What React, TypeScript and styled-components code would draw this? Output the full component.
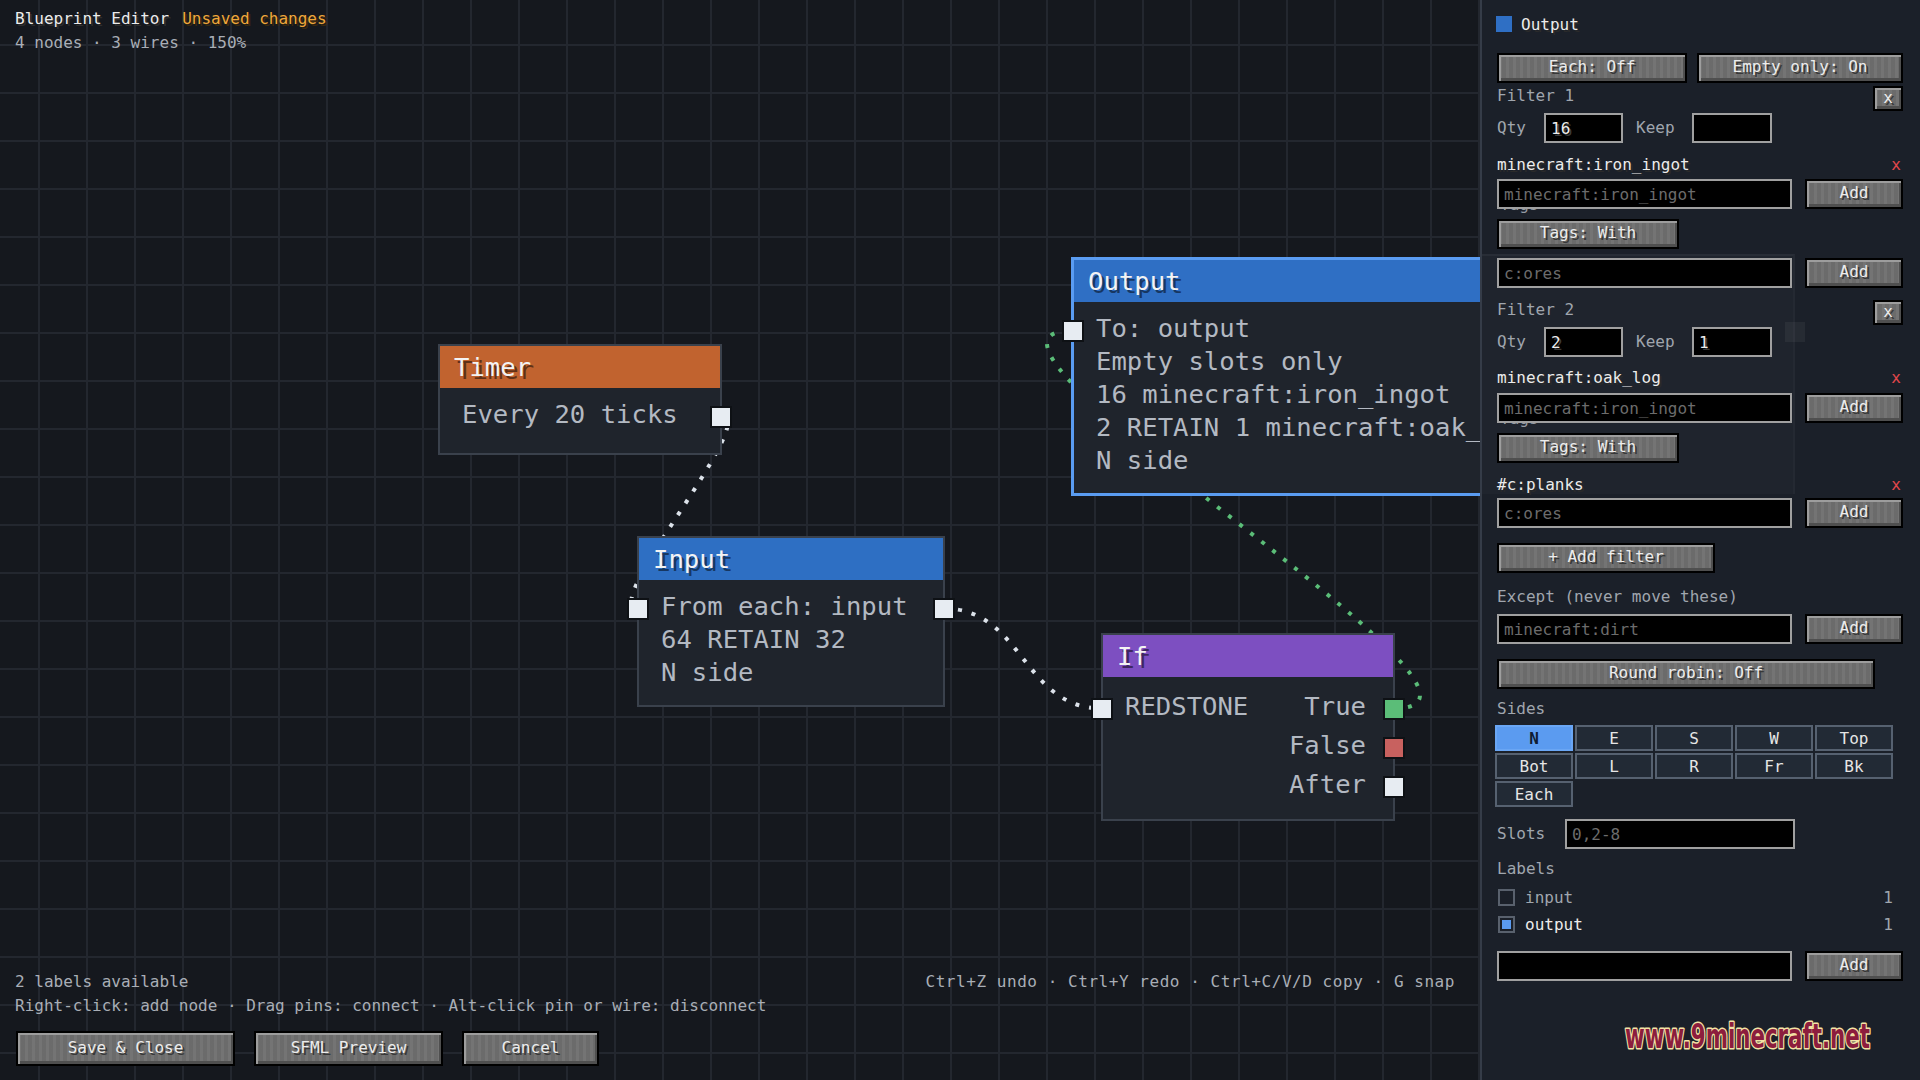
import React from "react";
import styled, { createGlobalStyle } from "styled-components";

const MONO = `"DejaVu Sans Mono", "Liberation Mono", monospace`;

const GlobalStyle = createGlobalStyle`
  html, body { margin: 0; padding: 0; width: 1920px; height: 1080px; overflow: hidden; background: #15181e; }
  body { font-family: ${MONO}; font-size: 16px; }
  *, *::before, *::after { box-sizing: border-box; }
`;

const Screen = styled.div`
  width: 1920px;
  height: 1080px;
  display: flex;
`;

/* ---------------- canvas ---------------- */

const Canvas = styled.main`
  position: relative;
  flex: 1 1 auto;
  min-width: 0;
  height: 100%;
  overflow: hidden;
  background-color: #15181e;
  background-image: linear-gradient(to right, #23272f 0 2px, transparent 2px),
    linear-gradient(to bottom, #23272f 0 2px, transparent 2px);
  background-size: 48px 48px;
  background-position: 38px 44px;
`;

const GraphLayer = styled.div`
  position: absolute;
  inset: 0;
`;

const WireSvg = styled.svg`
  position: absolute;
  left: 0;
  top: 0;
  overflow: visible;
`;

const GraphNode = styled.div<{ $selected?: boolean }>`
  position: absolute;
  display: flex;
  flex-direction: column;
  background: #1f242c;
  border: ${(p) => (p.$selected ? "3px solid #5a9cf2" : "2px solid #3a414c")};
`;

const NodeHeader = styled.div<{ $color: string }>`
  flex: none;
  height: 42px;
  padding-left: 14px;
  display: flex;
  align-items: center;
  background: ${(p) => p.$color};
  color: #f3f3f3;
  font-size: 25.6px;
  text-shadow: 3px 3px 0 rgba(0, 0, 0, 0.5);
  white-space: nowrap;
`;

const NodeBody = styled.div`
  padding-top: 9px;
`;

const NodeLine = styled.div<{ $h?: number; $justify?: string }>`
  position: relative;
  height: ${(p) => p.$h ?? 33}px;
  display: flex;
  align-items: center;
  justify-content: ${(p) => p.$justify ?? "flex-start"};
  padding: 0 27px 0 22px;
  color: #b3b9c2;
  font-size: 25.6px;
  white-space: nowrap;
`;

const Pin = styled.span<{ $side: "left" | "right"; $color?: string }>`
  position: absolute;
  top: 50%;
  margin-top: -8px;
  ${(p) => p.$side}: -12px;
  width: 22px;
  height: 22px;
  background: ${(p) => p.$color ?? "#e7ecf2"};
  border: 2px solid #0e1115;
`;

/* ---------------- canvas overlay ---------------- */

const Overlay = styled.div`
  position: relative;
  z-index: 2;
  height: 100%;
  display: flex;
  flex-direction: column;
  justify-content: space-between;
  padding: 7px 25px 14px 15px;
  font-size: 16px;
  line-height: 24px;
  pointer-events: none;
`;

const TitleLine = styled.div`
  color: #ececec;
  text-shadow: 2px 2px 0 #2e2e2e;
  white-space: nowrap;
`;

const Unsaved = styled.span`
  color: #efa73a;
  margin-left: 13px;
  text-shadow: 2px 2px 0 #3b2a0e;
`;

const HelpText = styled.div<{ $spread?: boolean }>`
  color: #a9aeb6;
  white-space: nowrap;
  letter-spacing: ${(p) => (p.$spread ? "0.55px" : "0")};
`;

const Footer = styled.div`
  display: flex;
  flex-direction: column;
`;

const FooterRow = styled.div`
  display: flex;
  justify-content: space-between;
`;

const ButtonBar = styled.div`
  display: flex;
  gap: 19px;
  margin-top: 13px;
  margin-left: 1px;
`;

const McButton = styled.div<{ $w: number; $h?: number }>`
  flex: none;
  width: ${(p) => p.$w}px;
  height: ${(p) => p.$h ?? 30}px;
  border: 2px solid #000;
  background-color: #6f6f6f;
  background-image: repeating-linear-gradient(
      90deg,
      rgba(255, 255, 255, 0.035) 0 3px,
      rgba(0, 0, 0, 0.035) 3px 7px
    );
  box-shadow: inset 2px 2px 0 #9d9d9d, inset -2px -3px 0 #4f4f4f;
  color: #ececec;
  font-family: ${MONO};
  font-size: 16px;
  line-height: 1;
  text-shadow: 2px 2px 0 #383838;
  display: flex;
  align-items: center;
  justify-content: center;
  padding-bottom: 2px;
  white-space: nowrap;
`;

/* ---------------- sidebar ---------------- */

const Sidebar = styled.aside`
  position: relative;
  z-index: 0;
  flex: none;
  width: 440px;
  height: 100%;
  background: #1b2029;
  border-left: 2px solid #353c48;
  padding: 16px 17px 0 15px;
  display: flex;
  flex-direction: column;
  font-size: 16px;
  color: #e6e6e6;
`;

const GhostPanel = styled.div`
  position: absolute;
  z-index: -1;
  left: 0;
  top: 254px;
  width: 313px;
  height: 240px;
  background: rgba(255, 255, 255, 0.018);
  border-top: 2px solid rgba(255, 255, 255, 0.04);
  border-right: 2px solid rgba(255, 255, 255, 0.025);
`;

const GhostKnob = styled.div`
  position: absolute;
  right: -12px;
  top: 66px;
  width: 20px;
  height: 20px;
  background: rgba(255, 255, 255, 0.05);
`;

const PanelTitle = styled.div`
  flex: none;
  height: 16px;
  display: flex;
  align-items: center;
  gap: 9px;
  color: #ececec;
  text-shadow: 2px 2px 0 #2a2a2a;
`;

const Swatch = styled.span<{ $color: string }>`
  width: 16px;
  height: 16px;
  margin-left: -1px;
  background: ${(p) => p.$color};
`;

const ToggleRow = styled.div<{ $mt: number }>`
  flex: none;
  margin-top: ${(p) => p.$mt}px;
  display: flex;
  gap: 10px;
`;

const FilterHead = styled.div<{ $mt: number }>`
  flex: none;
  margin-top: ${(p) => p.$mt}px;
  height: 25px;
  display: flex;
  justify-content: space-between;
  align-items: flex-start;
`;

const MutedText = styled.span<{ $w?: number; $ml?: number }>`
  flex: none;
  color: #a0a6ae;
  line-height: 20px;
  white-space: nowrap;
  ${(p) => (p.$w ? `width: ${p.$w}px;` : "")}
  ${(p) => (p.$ml ? `margin-left: ${p.$ml}px;` : "")}
`;

const QtyRow = styled.div<{ $mt: number }>`
  flex: none;
  margin-top: ${(p) => p.$mt}px;
  height: 30px;
  display: flex;
  align-items: center;
`;

const ItemRow = styled.div<{ $mt: number }>`
  flex: none;
  margin-top: ${(p) => p.$mt}px;
  height: 18px;
  display: flex;
  align-items: center;
  justify-content: space-between;
  color: #ececec;
  text-shadow: 2px 2px 0 #2a2a2a;
  white-space: nowrap;
`;

const RemoveMark = styled.span`
  color: #e0474b;
  text-shadow: none;
  margin-right: 2px;
`;

const EntryRow = styled.div<{ $mt: number }>`
  position: relative;
  flex: none;
  margin-top: ${(p) => p.$mt}px;
  height: 30px;
  display: flex;
  align-items: center;
  justify-content: space-between;
`;

const PeekLabel = styled.span`
  position: absolute;
  z-index: -1;
  left: 3px;
  top: 17px;
  line-height: 18px;
  color: #959ba3;
`;

const Field = styled.div<{ $w: number; $filled?: boolean }>`
  flex: none;
  width: ${(p) => p.$w}px;
  height: 30px;
  background: #000;
  border: 2px solid #a0a0a0;
  padding-left: 5px;
  display: flex;
  align-items: center;
  color: ${(p) => (p.$filled ? "#ececec" : "#6c6c6c")};
  text-shadow: ${(p) => (p.$filled ? "2px 2px 0 #3a3a3a" : "none")};
  white-space: nowrap;
  overflow: hidden;
`;

const ButtonLine = styled.div<{ $mt: number }>`
  flex: none;
  margin-top: ${(p) => p.$mt}px;
  display: flex;
`;

const SectionLabel = styled.div<{ $mt: number }>`
  flex: none;
  margin-top: ${(p) => p.$mt}px;
  height: 18px;
  line-height: 18px;
  color: #a0a6ae;
  white-space: nowrap;
`;

const SidesGrid = styled.div<{ $mt: number }>`
  flex: none;
  margin-top: ${(p) => p.$mt}px;
  margin-left: -2px;
  display: grid;
  grid-template-columns: repeat(5, 78px);
  grid-auto-rows: 26px;
  gap: 2px;
`;

const SideCell = styled.div<{ $active?: boolean }>`
  display: flex;
  align-items: center;
  justify-content: center;
  border: 2px solid ${(p) => (p.$active ? "#6aa6f4" : "#566170")};
  background: ${(p) => (p.$active ? "#5b9bf0" : "#222a35")};
  color: ${(p) => (p.$active ? "#0f1d33" : "#e6e6e6")};
  font-weight: ${(p) => (p.$active ? 700 : 400)};
`;

const SlotsRow = styled.div<{ $mt: number }>`
  flex: none;
  margin-top: ${(p) => p.$mt}px;
  height: 30px;
  display: flex;
  align-items: center;
`;

const LabelItem = styled.div<{ $mt: number; $on?: boolean }>`
  flex: none;
  margin-top: ${(p) => p.$mt}px;
  height: 18px;
  display: flex;
  align-items: center;
  gap: 10px;
  color: ${(p) => (p.$on ? "#ececec" : "#a0a6ae")};
`;

const CheckBox = styled.span<{ $on?: boolean }>`
  flex: none;
  width: 17px;
  height: 17px;
  margin-left: 1px;
  border: 2px solid #59616d;
  background: ${(p) => (p.$on ? "#5b9bf0" : "transparent")};
  box-shadow: ${(p) => (p.$on ? "inset 0 0 0 2px #1b2029" : "none")};
`;

const Count = styled.span`
  margin-left: auto;
  margin-right: 10px;
  color: #a0a6ae;
`;

const Watermark = styled.svg`
  position: absolute;
  right: 46px;
  top: 1019px;
`;

/* ---------------- data ---------------- */

type Pt = { x: number; y: number };
type NodeGeom = { x: number; y: number; w: number; h: number; b: number };

const TIMER: NodeGeom = { x: 438, y: 344, w: 284, h: 111, b: 2 };
const INPUT: NodeGeom = { x: 637, y: 536, w: 308, h: 171, b: 2 };
const OUTPUT: NodeGeom = { x: 1071, y: 257, w: 480, h: 239, b: 3 };
const IFNODE: NodeGeom = { x: 1101, y: 633, w: 294, h: 188, b: 2 };

const pinY = (n: NodeGeom, idx: number, rowH = 33) =>
  n.y + n.b + 42 + 9 + idx * rowH + rowH / 2 + 3;
const leftPin = (n: NodeGeom, idx: number, rowH = 33): Pt => ({
  x: n.x + n.b - 1,
  y: pinY(n, idx, rowH),
});
const rightPin = (n: NodeGeom, idx: number, rowH = 33): Pt => ({
  x: n.x + n.w - n.b + 1,
  y: pinY(n, idx, rowH),
});

const wirePath = (a: Pt, b: Pt) => {
  const dx = Math.max(40, Math.abs(b.x - a.x) / 2);
  return `M ${a.x} ${a.y} C ${a.x + dx} ${a.y}, ${b.x - dx} ${b.y}, ${b.x} ${b.y}`;
};

const wires = [
  { from: rightPin(TIMER, 0), to: leftPin(INPUT, 0), color: "#dce2ea" },
  { from: rightPin(INPUT, 0), to: leftPin(IFNODE, 0, 39), color: "#dce2ea" },
  { from: rightPin(IFNODE, 0, 39), to: leftPin(OUTPUT, 0), color: "#5bbd78" },
];

const box = (n: NodeGeom) => ({ left: n.x, top: n.y, width: n.w, height: n.h });

const sides = ["N", "E", "S", "W", "Top", "Bot", "L", "R", "Fr", "Bk", "Each"];

export default function App() {
  return (
    <>
      <GlobalStyle />
      <Screen>
        <Canvas>
          <GraphLayer>
            <WireSvg width={1480} height={1080}>
              {wires.map((w, i) => (
                <path
                  key={i}
                  d={wirePath(w.from, w.to)}
                  fill="none"
                  stroke={w.color}
                  strokeWidth={4}
                  strokeDasharray="4 10"
                />
              ))}
            </WireSvg>

            <GraphNode style={box(TIMER)}>
              <NodeHeader $color="#c1632f">Timer</NodeHeader>
              <NodeBody>
                <NodeLine>
                  Every 20 ticks
                  <Pin $side="right" />
                </NodeLine>
              </NodeBody>
            </GraphNode>

            <GraphNode style={box(INPUT)}>
              <NodeHeader $color="#2e6fc3">Input</NodeHeader>
              <NodeBody>
                <NodeLine>
                  <Pin $side="left" />
                  From each: input
                  <Pin $side="right" />
                </NodeLine>
                <NodeLine>64 RETAIN 32</NodeLine>
                <NodeLine>N side</NodeLine>
              </NodeBody>
            </GraphNode>

            <GraphNode style={box(OUTPUT)} $selected>
              <NodeHeader $color="#2f6fc4">Output</NodeHeader>
              <NodeBody>
                <NodeLine>
                  <Pin $side="left" />
                  To: output
                </NodeLine>
                <NodeLine>Empty slots only</NodeLine>
                <NodeLine>16 minecraft:iron_ingot</NodeLine>
                <NodeLine>2 RETAIN 1 minecraft:oak_log</NodeLine>
                <NodeLine>N side</NodeLine>
              </NodeBody>
            </GraphNode>

            <GraphNode style={box(IFNODE)}>
              <NodeHeader $color="#7d4fc1">If</NodeHeader>
              <NodeBody>
                <NodeLine $h={39} $justify="space-between">
                  <Pin $side="left" />
                  <span>REDSTONE</span>
                  <span>True</span>
                  <Pin $side="right" $color="#5bbd78" />
                </NodeLine>
                <NodeLine $h={39} $justify="flex-end">
                  False
                  <Pin $side="right" $color="#c8615f" />
                </NodeLine>
                <NodeLine $h={39} $justify="flex-end">
                  After
                  <Pin $side="right" />
                </NodeLine>
              </NodeBody>
            </GraphNode>
          </GraphLayer>

          <Overlay>
            <div>
              <TitleLine>
                Blueprint Editor<Unsaved>Unsaved changes</Unsaved>
              </TitleLine>
              <HelpText>4 nodes · 3 wires · 150%</HelpText>
            </div>
            <Footer>
              <FooterRow>
                <HelpText>2 labels available</HelpText>
                <HelpText $spread>Ctrl+Z undo · Ctrl+Y redo · Ctrl+C/V/D copy · G snap</HelpText>
              </FooterRow>
              <HelpText>
                Right-click: add node · Drag pins: connect · Alt-click pin or wire: disconnect
              </HelpText>
              <ButtonBar>
                <McButton $w={219} $h={35}>Save &amp; Close</McButton>
                <McButton $w={189} $h={35}>SFML Preview</McButton>
                <McButton $w={137} $h={35}>Cancel</McButton>
              </ButtonBar>
            </Footer>
          </Overlay>
        </Canvas>

        <Sidebar>
          <GhostPanel>
            <GhostKnob />
          </GhostPanel>

          <PanelTitle>
            <Swatch $color="#2f6fc4" />
            Output
          </PanelTitle>

          <ToggleRow $mt={21}>
            <McButton $w={190}>Each: Off</McButton>
            <McButton $w={206}>Empty only: On</McButton>
          </ToggleRow>

          {/* Filter 1 */}
          <FilterHead $mt={3}>
            <MutedText>Filter 1</MutedText>
            <McButton $w={30} $h={25}>x</McButton>
          </FilterHead>
          <QtyRow $mt={2}>
            <MutedText $w={47}>Qty</MutedText>
            <Field $w={79} $filled>16</Field>
            <MutedText $w={56} $ml={13}>Keep</MutedText>
            <Field $w={80} $filled />
          </QtyRow>
          <ItemRow $mt={12}>
            <span>minecraft:iron_ingot</span>
            <RemoveMark>x</RemoveMark>
          </ItemRow>
          <EntryRow $mt={6}>
            <PeekLabel>Tags</PeekLabel>
            <Field $w={295}>minecraft:iron_ingot</Field>
            <McButton $w={98}>Add</McButton>
          </EntryRow>
          <ButtonLine $mt={10}>
            <McButton $w={182}>Tags: With</McButton>
          </ButtonLine>
          <EntryRow $mt={9}>
            <Field $w={295}>c:ores</Field>
            <McButton $w={98}>Add</McButton>
          </EntryRow>

          {/* Filter 2 */}
          <FilterHead $mt={12}>
            <MutedText>Filter 2</MutedText>
            <McButton $w={30} $h={25}>x</McButton>
          </FilterHead>
          <QtyRow $mt={2}>
            <MutedText $w={47}>Qty</MutedText>
            <Field $w={79} $filled>2</Field>
            <MutedText $w={56} $ml={13}>Keep</MutedText>
            <Field $w={80} $filled>1</Field>
          </QtyRow>
          <ItemRow $mt={11}>
            <span>minecraft:oak_log</span>
            <RemoveMark>x</RemoveMark>
          </ItemRow>
          <EntryRow $mt={7}>
            <PeekLabel>Tags</PeekLabel>
            <Field $w={295}>minecraft:iron_ingot</Field>
            <McButton $w={98}>Add</McButton>
          </EntryRow>
          <ButtonLine $mt={10}>
            <McButton $w={182}>Tags: With</McButton>
          </ButtonLine>
          <ItemRow $mt={12}>
            <span>#c:planks</span>
            <RemoveMark>x</RemoveMark>
          </ItemRow>
          <EntryRow $mt={5}>
            <Field $w={295}>c:ores</Field>
            <McButton $w={98}>Add</McButton>
          </EntryRow>
          <ButtonLine $mt={15}>
            <McButton $w={218}>+ Add filter</McButton>
          </ButtonLine>

          <SectionLabel $mt={15}>Except (never move these)</SectionLabel>
          <EntryRow $mt={8}>
            <Field $w={295}>minecraft:dirt</Field>
            <McButton $w={98}>Add</McButton>
          </EntryRow>
          <ButtonLine $mt={15}>
            <McButton $w={378}>Round robin: Off</McButton>
          </ButtonLine>

          <SectionLabel $mt={11}>Sides</SectionLabel>
          <SidesGrid $mt={7}>
            {sides.map((s) => (
              <SideCell key={s} $active={s === "N"}>
                {s}
              </SideCell>
            ))}
          </SidesGrid>

          <SlotsRow $mt={12}>
            <MutedText $w={68}>Slots</MutedText>
            <Field $w={230}>0,2-8</Field>
          </SlotsRow>

          <SectionLabel $mt={11}>Labels</SectionLabel>
          <LabelItem $mt={10}>
            <CheckBox />
            input
            <Count>1</Count>
          </LabelItem>
          <LabelItem $mt={9} $on>
            <CheckBox $on />
            output
            <Count>1</Count>
          </LabelItem>
          <EntryRow $mt={18}>
            <Field $w={295} />
            <McButton $w={98}>Add</McButton>
          </EntryRow>

          <Watermark width={252} height={36}>
            <text
              x={3}
              y={29}
              textLength={245}
              lengthAdjust="spacingAndGlyphs"
              fontFamily='"DejaVu Sans Condensed", "DejaVu Sans", sans-serif'
              fontWeight={700}
              fontSize={33}
              fill="#8c1d3d"
              stroke="#f3e3a6"
              strokeWidth={3}
              paintOrder="stroke"
              strokeLinejoin="round"
            >
              www.9minecraft.net
            </text>
          </Watermark>
        </Sidebar>
      </Screen>
    </>
  );
}
